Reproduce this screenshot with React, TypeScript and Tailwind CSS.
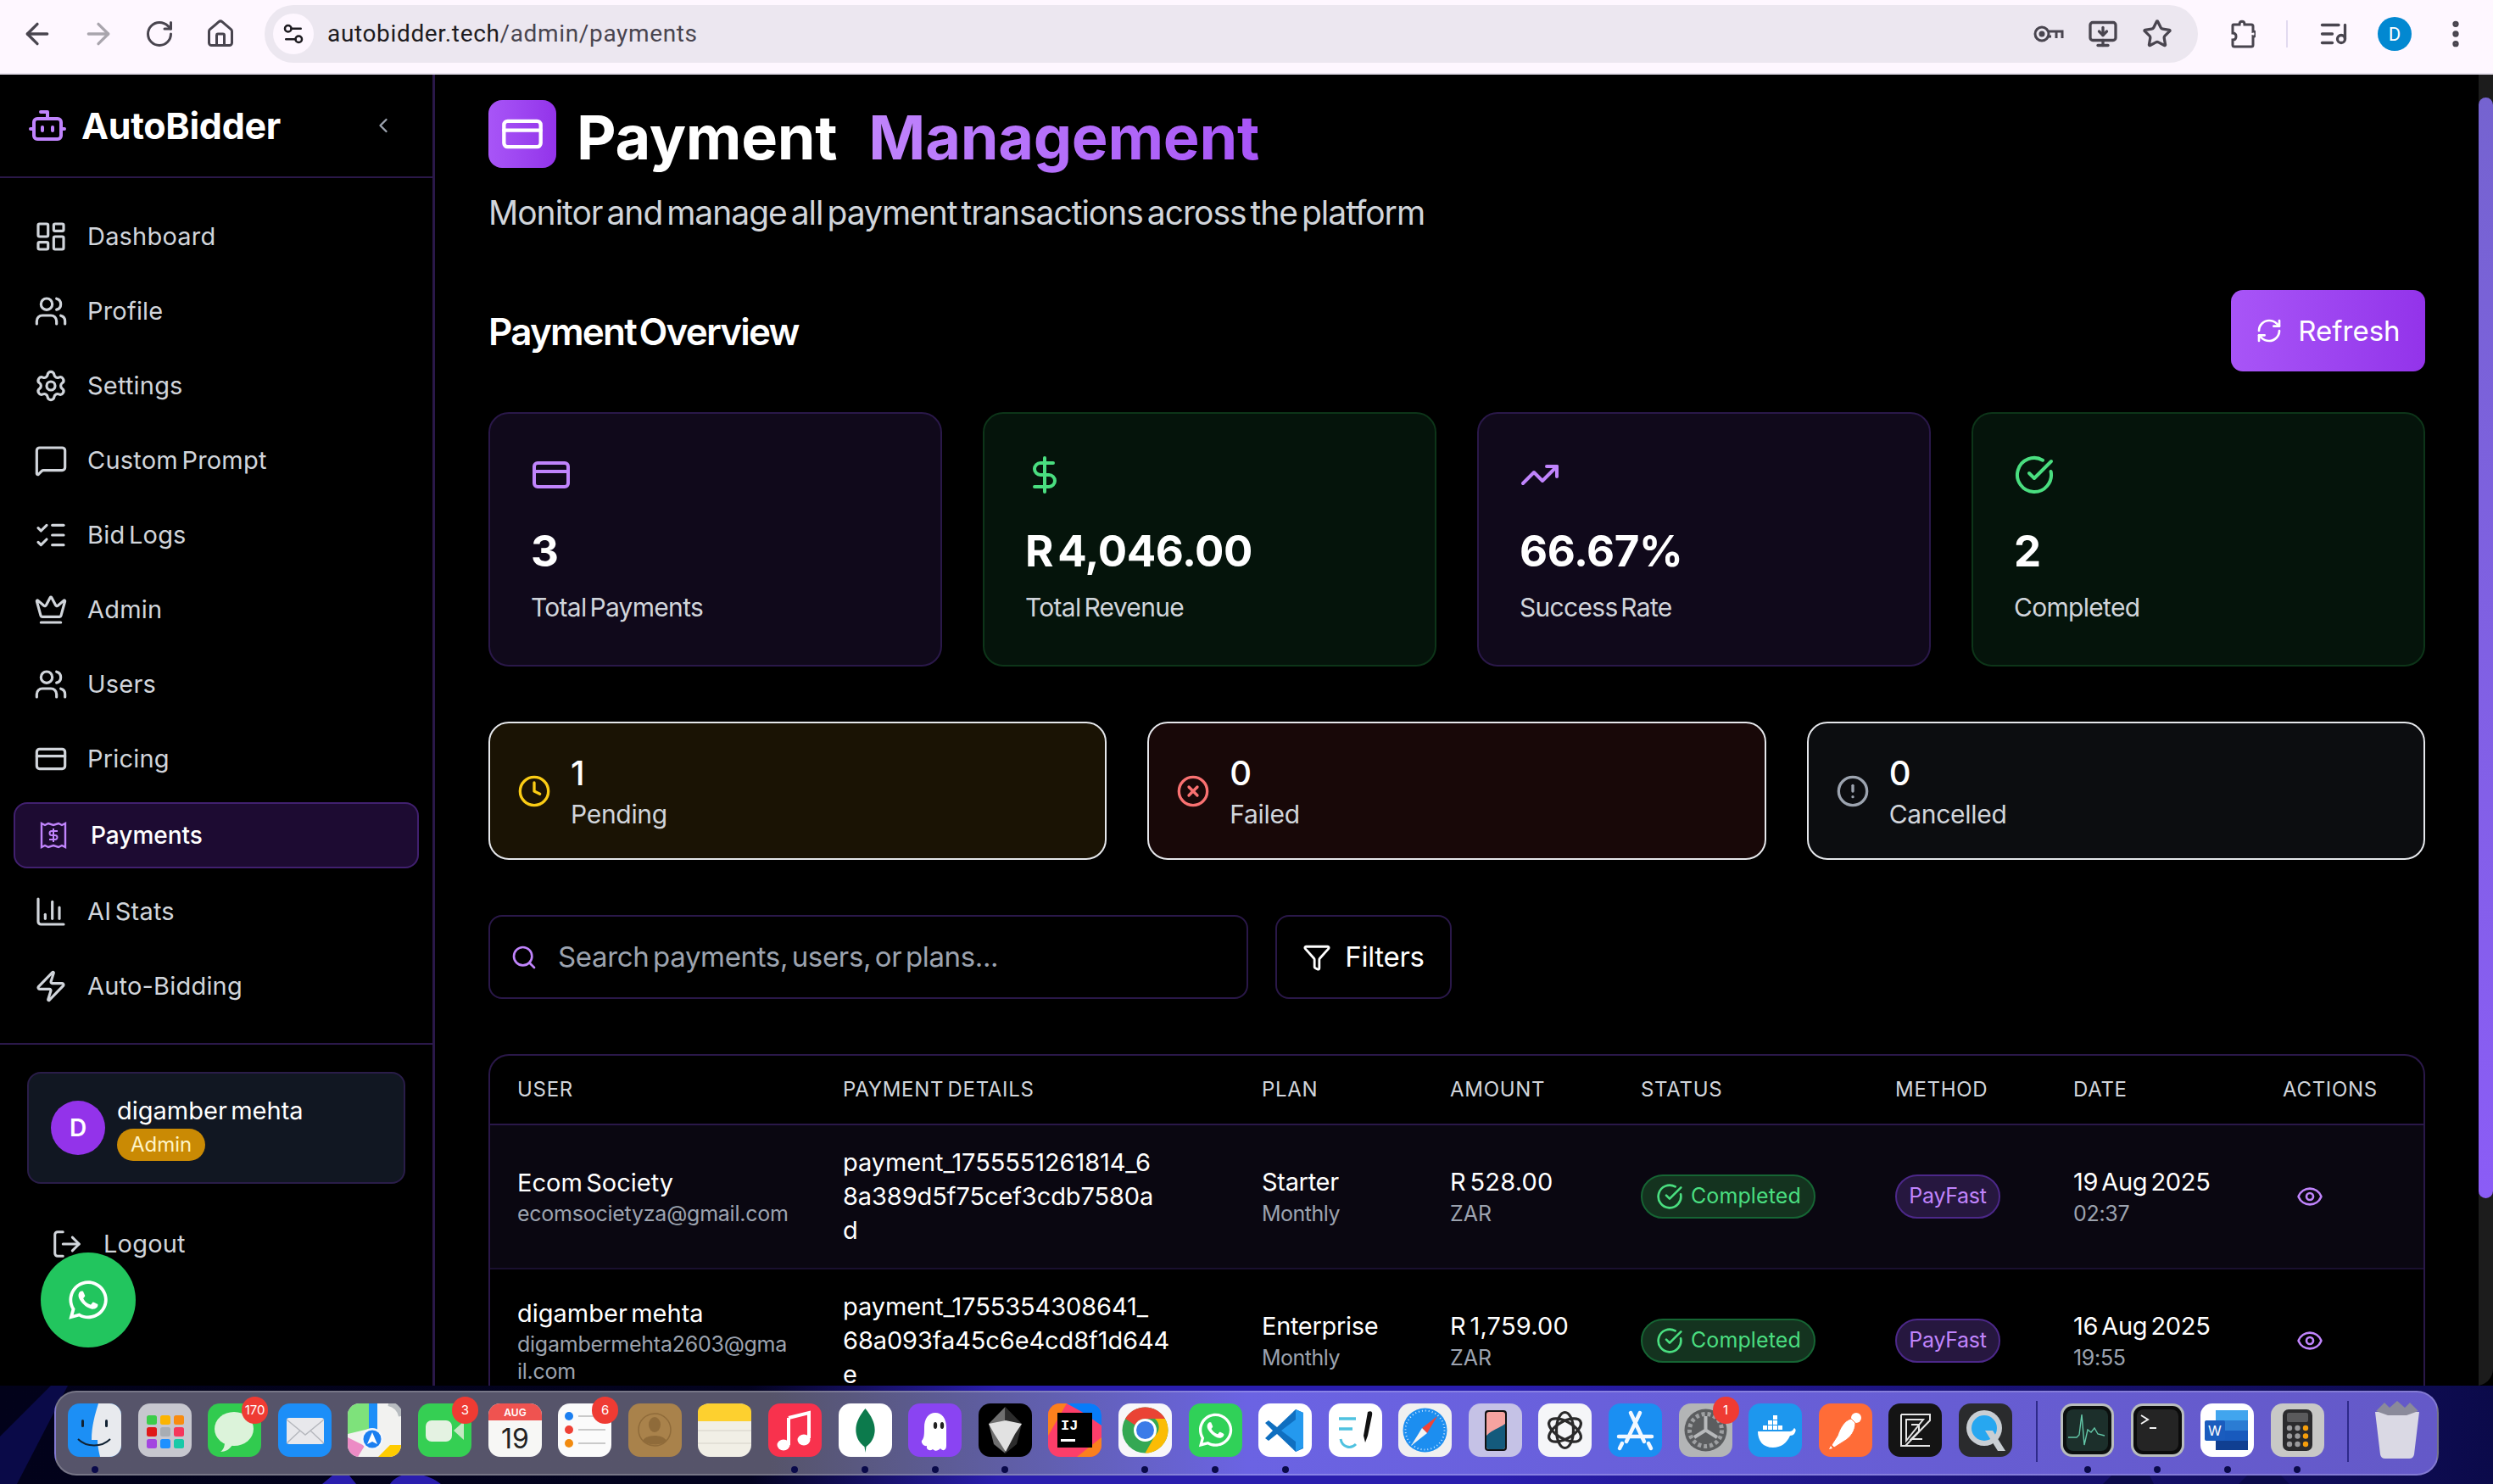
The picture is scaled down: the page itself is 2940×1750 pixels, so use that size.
import type { ReactNode } from "react";
import {
  ArrowLeft,
  ArrowRight,
  Bot,
  ChartColumn,
  ChevronLeft,
  CircleAlert,
  CircleCheckBig,
  CircleX,
  Clock,
  CreditCard,
  Crown,
  DollarSign,
  EllipsisVertical,
  Eye,
  Filter,
  House,
  LayoutDashboard,
  ListChecks,
  ListMusic,
  LogOut,
  MessageSquare,
  MonitorDown,
  RefreshCw,
  RotateCw,
  Search,
  Settings,
  Settings2,
  Star,
  TrendingUp,
  Users,
  Zap,
} from "lucide-react";
import { FaWhatsapp } from "react-icons/fa";

function ReceiptDollar({ className }: { className?: string }) {
  return (
    <svg viewBox="0 0 32 32" fill="none" stroke="currentColor" strokeWidth="2.4" className={className}>
      <path d="M2 2v28l4-2 4 2 6-2 6 2 4-2 4 2V2l-4 2-4-2-6 2-6-2-4 2z" />
      <path d="M21 11h-7a2.5 2.5 0 0 0 0 5h4a2.5 2.5 0 0 1 0 5h-7M16 8v16" strokeWidth="2" />
    </svg>
  );
}

function ChromeKey() {
  return (
    <svg viewBox="0 0 36 24" fill="none" stroke="currentColor" strokeWidth="3" className="h-[24px] w-[36px]">
      <circle cx="10" cy="12" r="8" />
      <circle cx="10" cy="12" r="2" fill="currentColor" />
      <path d="M18 9h16v8M27 9v8M18 15h3" />
    </svg>
  );
}

function ChromePuzzle() {
  return (
    <svg viewBox="0 0 30 36" fill="none" stroke="currentColor" strokeWidth="3" className="h-[36px] w-[30px]">
      <path d="M4 7h7c0-5 6-5 6 0h8a2 2 0 0 1 2 2v6c4-1 4 7 0 6v10a2 2 0 0 1-2 2H5a2 2 0 0 1-2-2v-6c3 0 4-2 4-4s-1-4-4-4V8a1 1 0 0 1 1-1z" />
    </svg>
  );
}

const navItems = [
  { label: "Dashboard", icon: LayoutDashboard },
  { label: "Profile", icon: Users },
  { label: "Settings", icon: Settings },
  { label: "Custom Prompt", icon: MessageSquare },
  { label: "Bid Logs", icon: ListChecks },
  { label: "Admin", icon: Crown },
  { label: "Users", icon: Users },
  { label: "Pricing", icon: CreditCard },
  { label: "Payments", icon: ReceiptDollar, active: true },
  { label: "AI Stats", icon: ChartColumn },
  { label: "Auto-Bidding", icon: Zap },
];

const payments = [
  {
    name: "Ecom Society",
    email: ["ecomsocietyza@gmail.com"],
    id: ["payment_1755551261814_6", "8a389d5f75cef3cdb7580a", "d"],
    plan: "Starter",
    amount: "R 528.00",
    date: "19 Aug 2025",
    time: "02:37",
    rowClass: "bg-[#0a0711]",
  },
  {
    name: "digamber mehta",
    email: ["digambermehta2603@gma", "il.com"],
    id: ["payment_1755354308641_", "68a093fa45c6e4cd8f1d644", "e"],
    plan: "Enterprise",
    amount: "R 1,759.00",
    date: "16 Aug 2025",
    time: "19:55",
    rowClass: "bg-black",
  },
];

function BrowserBar() {
  return (
    <div className="flex h-[88px] shrink-0 items-center border-b-2 border-[#e8e2ee] bg-[#fef7ff] pb-[6px] text-[#49454f]">
      <div className="flex w-[312px] items-center pl-[24px]">
        <ArrowLeft className="h-[40px] w-[40px]" strokeWidth={2} />
        <ArrowRight className="ml-[32px] h-[40px] w-[40px] text-[#a9a5ad]" strokeWidth={2} />
        <RotateCw className="ml-[34px] h-[36px] w-[36px]" strokeWidth={2} />
        <House className="ml-[36px] h-[36px] w-[36px]" strokeWidth={2} />
      </div>
      <div className="flex h-[68px] w-[2280px] items-center rounded-full bg-[#ece7f0] pl-[10px] pr-[30px]">
        <div className="flex h-[48px] w-[48px] items-center justify-center rounded-full bg-[#fef7ff]">
          <Settings2 className="h-[30px] w-[30px] text-[#1d1b20]" strokeWidth={2} />
        </div>
        <span className="ml-[16px] text-[28px] tracking-[0.65px] text-[#1d1b20] font-['Roboto',sans-serif]">
          autobidder.tech<span className="text-[#49454f]">/admin/payments</span>
        </span>
        <div className="ml-auto flex items-center gap-[28px]">
          <ChromeKey />
          <MonitorDown className="h-[36px] w-[36px]" strokeWidth={2.2} />
          <Star className="h-[36px] w-[36px]" strokeWidth={2.2} />
        </div>
      </div>
      <div className="ml-[38px]">
        <ChromePuzzle />
      </div>
      <div className="ml-[36px] h-[32px] w-[2px] bg-[#e2daf0]" />
      <ListMusic className="ml-[36px] h-[36px] w-[36px]" strokeWidth={2.2} />
      <div className="ml-[34px] flex h-[40px] w-[40px] items-center justify-center rounded-full bg-[#0288d1] text-[22px] text-white font-['Roboto',sans-serif]">
        D
      </div>
      <EllipsisVertical className="ml-[32px] h-[40px] w-[40px]" strokeWidth={2.4} />
    </div>
  );
}

function Sidebar() {
  return (
    <aside className="flex h-full w-[513px] shrink-0 flex-col border-r-[3px] border-[#2a1849]">
      <div className="flex h-[122px] shrink-0 items-center border-b-2 border-[#2a1849] pl-[32px] pr-[44px]">
        <Bot className="h-[48px] w-[48px] text-[#c084fc]" strokeWidth={2} />
        <span className="ml-[16px] text-[43px] font-bold tracking-[-0.3px] text-white">AutoBidder</span>
        <ChevronLeft className="ml-auto h-[28px] w-[28px] text-[#9ca3af]" strokeWidth={2} />
      </div>
      <nav className="flex h-[1022px] shrink-0 flex-col gap-[12px] border-b-2 border-[#2a1849] px-[16px] pt-[31px]">
        {navItems.map((item) => {
          const Icon = item.icon;
          return item.active ? (
            <a
              key={item.label}
              className="my-[1px] flex h-[78px] items-center rounded-[16px] border-2 border-[#41206f] bg-[#1d0b32] pl-[29px] text-[28px] font-medium text-white"
            >
              <Icon className="h-[32px] w-[32px] text-[#c084fc]" />
              <span className="ml-[28px]">{item.label}</span>
            </a>
          ) : (
            <a key={item.label} className="flex h-[76px] items-center pl-[24px] text-[29px] tracking-[0.2px] text-[#d1d5db]">
              <Icon className="h-[40px] w-[40px]" strokeWidth={1.9} />
              <span className="ml-[23px]">{item.label}</span>
            </a>
          );
        })}
      </nav>
      <div className="relative flex-1 px-[32px] pt-[32px]">
        <div className="flex h-[132px] w-[446px] items-center gap-[14px] rounded-[16px] border-2 border-[#2a1d49] bg-[#111722] pl-[26px]">
          <div className="flex h-[64px] w-[64px] items-center justify-center rounded-full bg-[#9333ea] text-[28px] font-semibold text-white">
            D
          </div>
          <div className="mt-[1px] flex flex-col">
            <span className="text-[29px] font-normal leading-[36px] text-white">digamber mehta</span>
            <span className="mt-[3px] w-fit rounded-full bg-[#ca8a04] px-[16px] text-[24px] leading-[38px] text-[#fef3c7]">
              Admin
            </span>
          </div>
        </div>
        <div className="ml-[28px] mt-[49px] flex items-center gap-[24px] text-[29px] tracking-[0.2px] text-[#d1d5db]">
          <LogOut className="h-[38px] w-[38px]" strokeWidth={1.9} />
          <span>Logout</span>
        </div>
        {/* floating whatsapp button */}
        <div className="absolute left-[48px] top-[245px] flex h-[112px] w-[112px] items-center justify-center rounded-full bg-[#22c55e]">
          <FaWhatsapp className="h-[52px] w-[52px] text-white" />
        </div>
      </div>
    </aside>
  );
}

function StatCard({
  icon,
  value,
  label,
  green,
}: {
  icon: ReactNode;
  value: string;
  label: string;
  green?: boolean;
}) {
  return (
    <div
      className={`h-[300px] rounded-[24px] border-2 px-[48px] pt-[48px] ${
        green ? "border-[#0d3519] bg-[#05140b]" : "border-[#2a1849] bg-[#10091b]"
      }`}
    >
      <div className="h-[48px]">{icon}</div>
      <div className="mt-[30px] text-[51px] font-bold leading-[72px] tracking-[-0.4px] text-white">{value}</div>
      <div className="mt-[10px] text-[30px] leading-[40px] tracking-[-0.7px] text-[#d1d5db]">{label}</div>
    </div>
  );
}

function SmallCard({
  icon,
  value,
  label,
  bg,
}: {
  icon: ReactNode;
  value: string;
  label: string;
  bg: string;
}) {
  return (
    <div className={`flex h-[163px] items-center gap-[23px] rounded-[24px] border-2 border-[#e5e7eb] pl-[32px] ${bg}`}>
      {icon}
      <div className="flex flex-col">
        <span className="mt-[2px] text-[40px] font-medium leading-[52px] text-white">{value}</span>
        <span className="text-[30px] leading-[44px] tracking-[-0.3px] text-[#d1d5db]">{label}</span>
      </div>
    </div>
  );
}

function PaymentsTable() {
  const headCell = "px-[32px] text-left text-[24px] font-normal tracking-[0.7px] text-[#d1d5db]";
  const cell = "px-[32px] py-[24px] align-middle";
  return (
    <div className="overflow-hidden rounded-t-[24px] border-x-2 border-t-2 border-[#2a1849]">
      <table className="w-full table-fixed border-collapse">
        <colgroup>
          <col className="w-[384px]" />
          <col className="w-[494px]" />
          <col className="w-[222px]" />
          <col className="w-[225px]" />
          <col className="w-[300px]" />
          <col className="w-[210px]" />
          <col className="w-[247px]" />
          <col />
        </colgroup>
        <thead>
          <tr className="h-[81px] border-b-2 border-[#2a1849]">
            <th className={headCell}>USER</th>
            <th className={headCell}>PAYMENT DETAILS</th>
            <th className={headCell}>PLAN</th>
            <th className={headCell}>AMOUNT</th>
            <th className={headCell}>STATUS</th>
            <th className={headCell}>METHOD</th>
            <th className={headCell}>DATE</th>
            <th className={headCell}>ACTIONS</th>
          </tr>
        </thead>
        <tbody>
          {payments.map((p) => (
            <tr key={p.name} className={`border-b-2 border-[#1a1030] ${p.rowClass}`}>
              <td className={cell}>
                <div className="text-[29px] leading-[40px] text-white">{p.name}</div>
                <div className="whitespace-nowrap text-[25px] leading-[32px] tracking-[-0.25px] text-[#9ca3af]">
                  {p.email.map((line) => (
                    <div key={line}>{line}</div>
                  ))}
                </div>
              </td>
              <td className={`${cell} whitespace-nowrap text-[29px] leading-[40px] tracking-[-0.1px] text-white`}>
                {p.id.map((line) => (
                  <div key={line}>{line}</div>
                ))}
              </td>
              <td className={cell}>
                <div className="text-[29px] leading-[40px] tracking-[-0.3px] text-white">{p.plan}</div>
                <div className="text-[25px] leading-[34px] tracking-[-0.5px] text-[#9ca3af]">Monthly</div>
              </td>
              <td className={cell}>
                <div className="text-[29px] leading-[40px] tracking-[0.2px] text-white">{p.amount}</div>
                <div className="text-[25px] leading-[34px] text-[#9ca3af]">ZAR</div>
              </td>
              <td className={cell}>
                <span className="inline-flex h-[52px] w-[206px] items-center gap-[9px] rounded-full border-2 border-[#166534] bg-[#14331f] pl-[16px] text-[25px] tracking-[0.1px] text-[#4ade80]">
                  <CircleCheckBig className="h-[32px] w-[32px]" strokeWidth={2} />
                  Completed
                </span>
              </td>
              <td className={cell}>
                <span className="inline-flex h-[52px] w-[124px] items-center justify-center rounded-full border-2 border-[#4c2889] bg-[#26173f] text-[25px] tracking-[-0.3px] text-[#c084fc]">
                  PayFast
                </span>
              </td>
              <td className={cell}>
                <div className="whitespace-nowrap text-[29px] leading-[40px] tracking-[-0.3px] text-white">{p.date}</div>
                <div className="text-[25px] leading-[34px] tracking-[-0.3px] text-[#9ca3af]">{p.time}</div>
              </td>
              <td className={cell}>
                <Eye className="ml-[16px] h-[32px] w-[32px] text-[#c084fc]" strokeWidth={2} />
              </td>
            </tr>
          ))}
        </tbody>
      </table>
    </div>
  );
}

function MainPanel() {
  return (
    <main className="flex h-full min-w-0 flex-1">
      <div className="min-w-0 flex-1 overflow-hidden pl-[63px] pr-[63px] pt-[30px]">
        <div className="flex h-[80px] items-center">
          <div className="flex h-[80px] w-[80px] items-center justify-center rounded-[16px] bg-gradient-to-r from-[#a855f7] to-[#9333ea]">
            <CreditCard className="h-[52px] w-[52px] text-white" strokeWidth={2} />
          </div>
          <h1 className="ml-[24px] pt-[8px] text-[72px] font-bold leading-[72px] tracking-[-0.3px] text-white">Payment</h1>
          <span className="ml-[37px] bg-gradient-to-r from-[#c084fc] to-[#a855f7] bg-clip-text pt-[8px] text-[72px] font-bold leading-[84px] tracking-[-0.3px] text-transparent">
            Management
          </span>
        </div>
        <p className="mt-[23px] text-[39px] leading-[60px] tracking-[-1px] text-[#d1d5db]">
          Monitor and manage all payment transactions across the platform
        </p>
        <div className="mt-[61px] flex h-[96px] items-center justify-between">
          <h2 className="mt-[2px] text-[44px] font-semibold tracking-[-1.8px] text-white">Payment Overview</h2>
          <button className="flex h-[96px] w-[229px] items-center justify-center gap-[18px] rounded-[14px] bg-gradient-to-r from-[#a855f7] to-[#9333ea] text-[33px] text-white">
            <RefreshCw className="h-[32px] w-[32px]" strokeWidth={2} />
            <span className="mt-[2px]">Refresh</span>
          </button>
        </div>
        <div className="mt-[48px] grid grid-cols-4 gap-[48px]">
          <StatCard icon={<CreditCard className="h-[48px] w-[48px] text-[#c084fc]" strokeWidth={2} />} value="3" label="Total Payments" />
          <StatCard icon={<DollarSign className="-ml-[1px] h-[48px] w-[48px] text-[#4ade80]" strokeWidth={2} />} value="R 4,046.00" label="Total Revenue" green />
          <StatCard icon={<TrendingUp className="h-[48px] w-[48px] text-[#c084fc]" strokeWidth={2} />} value="66.67%" label="Success Rate" />
          <StatCard icon={<CircleCheckBig className="h-[48px] w-[48px] text-[#4ade80]" strokeWidth={2} />} value="2" label="Completed" green />
        </div>
        <div className="mt-[65px] grid grid-cols-3 gap-[48px]">
          <SmallCard icon={<Clock className="h-[40px] w-[40px] text-[#facc15]" strokeWidth={2} />} value="1" label="Pending" bg="bg-[#1a1304]" />
          <SmallCard icon={<CircleX className="h-[40px] w-[40px] text-[#f87171]" strokeWidth={2} />} value="0" label="Failed" bg="bg-[#180808]" />
          <SmallCard icon={<CircleAlert className="h-[40px] w-[40px] text-[#9ca3af]" strokeWidth={2} />} value="0" label="Cancelled" bg="bg-[#0c0d10]" />
        </div>
        <div className="mt-[65px] flex h-[99px] gap-[32px]">
          <div className="flex w-[896px] items-center gap-[24px] rounded-[16px] border-2 border-[#2a1849] pl-[24px]">
            <Search className="h-[32px] w-[32px] text-[#c084fc]" strokeWidth={2} />
            <span className="text-[33px] tracking-[-0.35px] text-[#9ca3af]">Search payments, users, or plans...</span>
          </div>
          <div className="flex w-[208px] items-center justify-center gap-[16px] rounded-[16px] border-2 border-[#2a1849] text-[33px] tracking-[-0.3px] text-white">
            <Filter className="h-[34px] w-[34px]" strokeWidth={2} />
            Filters
          </div>
        </div>
        <div className="mt-[65px]">
          <PaymentsTable />
        </div>
      </div>
      {/* scrollbar */}
      <div className="h-full w-[17px] shrink-0 bg-[#1c1c1c] pt-[27px]">
        <div className="h-[1298px] rounded-full bg-gradient-to-b from-[#7563d0] to-[#8b5cf6]" />
      </div>
    </main>
  );
}

/* ---- dock ---- */

function Tile({ bg, children }: { bg: string; children?: ReactNode }) {
  return (
    <svg viewBox="0 0 63 63" className="h-[63px] w-[63px]">
      <rect width="63" height="63" rx="14" fill={bg} />
      {children}
    </svg>
  );
}

const dockLeft: { key: string; dot?: boolean; badge?: string; tile: ReactNode }[] = [
  {
    key: "finder",
    dot: true,
    tile: (
      <Tile bg="#1c8ff5">
        <path d="M36 0h13a14 14 0 0 1 14 14v35a14 14 0 0 1-14 14H38c-2-8-3-14-3-20h-7c0-16 4-30 8-43z" fill="#e8eaee" />
        <rect x="16" y="19" width="3" height="9" rx="1.5" fill="#123" />
        <rect x="44" y="19" width="3" height="9" rx="1.5" fill="#123" />
        <path d="M12 42c10 10 28 10 38 0" fill="none" stroke="#123" strokeWidth="2" />
      </Tile>
    ),
  },
  {
    key: "launchpad",
    tile: (
      <Tile bg="#c7c7cf">
        {["#3ccd4a", "#fcb400", "#f88b10", "#e01818", "#a8adb3", "#f5365c", "#a345e0", "#1e90ff", "#18c9a8"].map((c, i) => (
          <rect key={c} x={10 + (i % 3) * 16} y={14 + Math.floor(i / 3) * 14} width="12" height="11" rx="2.5" fill={c} />
        ))}
      </Tile>
    ),
  },
  {
    key: "messages",
    badge: "170",
    tile: (
      <Tile bg="#31cb4f">
        <ellipse cx="31" cy="30" rx="23" ry="20" fill="#dcf3da" />
        <path d="M20 46c0 5-2 9-5 11 6 0 11-3 14-8z" fill="#dcf3da" />
      </Tile>
    ),
  },
  {
    key: "mail",
    tile: (
      <Tile bg="#1c8ef8">
        <rect x="10" y="17" width="44" height="31" rx="3" fill="#e8e8ec" />
        <path d="M10 19l22 18 22-18M10 47l16-15M54 47L38 32" fill="none" stroke="#b5b7bd" strokeWidth="1.4" />
      </Tile>
    ),
  },
  {
    key: "maps",
    tile: (
      <Tile bg="#f2f2f0">
        <path d="M0 14A14 14 0 0 1 14 0h11v30L0 36z" fill="#7ee27b" />
        <path d="M25 0h10v36H25z" fill="#1c8ef8" />
        <path d="M0 40l20 10 -8 13H14A14 14 0 0 1 0 49z" fill="#ec8bc5" />
        <path d="M36 63l14-14 13 0a14 14 0 0 1-14 14z" fill="#ffcc00" />
        <path d="M48 0a18 18 0 0 1 15 15" fill="none" stroke="#b8bcc0" strokeWidth="6" />
        <circle cx="29" cy="42" r="13" fill="#f4f6fa" />
        <circle cx="29" cy="42" r="10.5" fill="#1c7ff0" />
        <path d="M29 34l6 14-6-3-6 3z" fill="#fff" />
      </Tile>
    ),
  },
  {
    key: "facetime",
    badge: "3",
    tile: (
      <Tile bg="#35cf53">
        <rect x="9" y="20" width="31" height="25" rx="7" fill="#e4f2e2" />
        <path d="M42 32l12-11v22z" fill="#c5e8c3" />
      </Tile>
    ),
  },
  {
    key: "calendar",
    tile: (
      <Tile bg="#f7f7f5">
        <path d="M0 14A14 14 0 0 1 14 0h35a14 14 0 0 1 14 14v6H0z" fill="#ef5350" />
        <text x="31.5" y="15" textAnchor="middle" fontSize="12" fontFamily="Inter, sans-serif" fontWeight="600" fill="#fff">AUG</text>
        <text x="31.5" y="53" textAnchor="middle" fontSize="32" fontFamily="Inter, sans-serif" fill="#222">19</text>
      </Tile>
    ),
  },
  {
    key: "reminders",
    badge: "6",
    tile: (
      <Tile bg="#fbfbfb">
        <circle cx="13" cy="15" r="5" fill="#1c7ff0" />
        <circle cx="13" cy="31" r="5" fill="#ef4136" />
        <circle cx="13" cy="47" r="5" fill="#f28b10" />
        <path d="M24 15h32M24 31h32M24 47h32" stroke="#bbb" strokeWidth="1.5" />
      </Tile>
    ),
  },
  {
    key: "contacts",
    tile: (
      <Tile bg="#a9824b">
        <circle cx="31" cy="31" r="19" fill="none" stroke="#8f6b3a" strokeWidth="1.5" />
        <ellipse cx="31" cy="25" rx="7" ry="9" fill="#8f6b3a" />
        <path d="M17 44c4-8 24-8 28 0-6 6-22 6-28 0z" fill="#8f6b3a" />
      </Tile>
    ),
  },
  {
    key: "notes",
    tile: (
      <Tile bg="#f1efe6">
        <path d="M0 14A14 14 0 0 1 14 0h35a14 14 0 0 1 14 14v16H0z" fill="#fdd02f" transform="scale(1 .7)" />
        <path d="M0 32h63M0 47h63" stroke="#dedcd2" strokeWidth="1.5" />
      </Tile>
    ),
  },
  {
    key: "music",
    dot: true,
    tile: (
      <Tile bg="#f8324d">
        <path d="M24 17l24-6v30" fill="none" stroke="#fff" strokeWidth="4" />
        <path d="M24 17v32" stroke="#fff" strokeWidth="4" />
        <ellipse cx="18" cy="49" rx="7.5" ry="6.5" fill="#fff" />
        <ellipse cx="42" cy="43" rx="7.5" ry="6.5" fill="#fff" />
      </Tile>
    ),
  },
  {
    key: "mongodb",
    dot: true,
    tile: (
      <Tile bg="#ffffff">
        <path d="M31.5 6c8 10 12 18 11 28-1 9-6 14-10 17l-1 7-1-7c-4-3-9-8-10-17-1-10 3-18 11-28z" fill="#0c7a4c" />
      </Tile>
    ),
  },
  {
    key: "ghost",
    dot: true,
    tile: (
      <Tile bg="#8a44f2">
        <path d="M16 44c3-3 3-8 3-16 0-10 5-17 13-17s13 7 13 17v22c0 5-4 7-7 3-3 3-6 4-9 1-4 3-8 0-7-4-3 1-7-3-6-6z" fill="#fff" />
        <ellipse cx="32" cy="26" rx="2.2" ry="4" fill="#222" />
        <ellipse cx="40" cy="26" rx="2.2" ry="4" fill="#222" />
      </Tile>
    ),
  },
  {
    key: "crystal",
    dot: true,
    tile: (
      <Tile bg="#000000">
        <path d="M31.5 4L12 24l6 24 13.5 11z" fill="#6f6f6f" />
        <path d="M31.5 4L51 24l-6 24L31.5 59z" fill="#2c2c2c" />
        <path d="M12 24l20-4 19 4-8 12-11 21-14-22z" fill="#e2e2e2" />
      </Tile>
    ),
  },
  {
    key: "intellij",
    tile: (
      <Tile bg="#fc3e6a">
        <path d="M0 14A14 14 0 0 1 14 0h8L0 38z" fill="#fc801d" />
        <path d="M22 0h27a14 14 0 0 1 14 14v12L40 10z" fill="#087cfa" />
        <path d="M63 40v9a14 14 0 0 1-14 14H34z" fill="#fc801d" />
        <rect x="11" y="11" width="41" height="41" fill="#000" />
        <text x="15" y="31" fontSize="17" fontFamily="Liberation Mono, monospace" fontWeight="700" fill="#fff">IJ</text>
        <rect x="15" y="42" width="17" height="3" fill="#fff" />
      </Tile>
    ),
  },
  {
    key: "chrome",
    dot: true,
    tile: (
      <Tile bg="#f7f6fa">
        <circle cx="31.5" cy="31.5" r="27" fill="#34a853" />
        <path d="M31.5 4.5a27 27 0 0 1 23.4 13.5H31.5a13.5 13.5 0 0 0-12 7.5L8.1 18A27 27 0 0 1 31.5 4.5z" fill="#ea4335" />
        <path d="M54.9 18a27 27 0 0 1-23.4 40.5L43 38a13 13 0 0 0 0-20z" fill="#fbbc04" />
        <circle cx="31.5" cy="31.5" r="13.5" fill="#fff" />
        <circle cx="31.5" cy="31.5" r="10.5" fill="#3b7be8" />
      </Tile>
    ),
  },
  {
    key: "whatsapp",
    dot: true,
    tile: (
      <Tile bg="#30d158">
        <foreignObject x="9" y="9" width="45" height="45">
          <FaWhatsapp className="h-[45px] w-[45px] text-white" />
        </foreignObject>
      </Tile>
    ),
  },
  {
    key: "vscode",
    dot: true,
    tile: (
      <Tile bg="#ffffff">
        <path d="M44 7L22 28 12 20l-4 3 9 9-9 9 4 3 10-8 22 21 9-4V11z" fill="#0f6fc0" />
        <path d="M44 7l9 4v41l-9 5V19L27 32l17 13z" fill="#2499ee" />
      </Tile>
    ),
  },
  {
    key: "freeform",
    tile: (
      <Tile bg="#ffffff">
        <path d="M12 18h20M12 30h16" stroke="#4fc2e0" strokeWidth="3.5" />
        <path d="M14 42c2 10 12 12 18 6" fill="none" stroke="#4fc2e0" strokeWidth="3" />
        <path d="M46 10c4-2 6 0 5 4l-5 24-3 8-2-8z" fill="#111" />
      </Tile>
    ),
  },
  {
    key: "safari",
    tile: (
      <Tile bg="#f0f0f0">
        <circle cx="31.5" cy="31.5" r="26" fill="#1c8ef0" />
        <circle cx="31.5" cy="31.5" r="23" fill="none" stroke="#cfe6ff" strokeWidth="2" strokeDasharray="1 3" />
        <path d="M46 15L28 29l6 6z" fill="#f04438" />
        <path d="M15 50l13-21 6 6z" fill="#f4f4f4" />
      </Tile>
    ),
  },
  {
    key: "mirroring",
    tile: (
      <Tile bg="#c5c2e6">
        <rect x="19" y="8" width="26" height="48" rx="4" fill="#111" />
        <rect x="21" y="10" width="22" height="44" rx="3" fill="#f5a3a0" />
        <path d="M21 38c8-8 14-8 22-14v27a3 3 0 0 1-3 3H24a3 3 0 0 1-3-3z" fill="#145a7c" />
      </Tile>
    ),
  },
  {
    key: "chatgpt",
    tile: (
      <Tile bg="#f5f6f8">
        <g fill="none" stroke="#2a2a2a" strokeWidth="3.2">
          <ellipse cx="31.5" cy="31.5" rx="10" ry="21" />
          <ellipse cx="31.5" cy="31.5" rx="10" ry="21" transform="rotate(60 31.5 31.5)" />
          <ellipse cx="31.5" cy="31.5" rx="10" ry="21" transform="rotate(120 31.5 31.5)" />
        </g>
      </Tile>
    ),
  },
  {
    key: "appstore",
    tile: (
      <Tile bg="#1a8ff2">
        <path d="M37 11L21 45M26 11l16 34M12 39h39M16 47l-3 6M47 47l3 6" stroke="#f2f8ff" strokeWidth="4.5" strokeLinecap="round" />
      </Tile>
    ),
  },
  {
    key: "settings",
    badge: "1",
    tile: (
      <Tile bg="#b3b5b6">
        <circle cx="31.5" cy="31.5" r="25" fill="#5b5d5f" />
        <circle cx="31.5" cy="31.5" r="19" fill="none" stroke="#9ea0a2" strokeWidth="5" strokeDasharray="4 3" />
        <path d="M31.5 31.5V15M31.5 31.5L18 40M31.5 31.5L45 40" stroke="#b7b9bb" strokeWidth="4" />
      </Tile>
    ),
  },
  {
    key: "docker",
    tile: (
      <Tile bg="#1d97ee">
        <path d="M11 33h38c3 0 4-3 5-4 2 1 2 3 1 5-1 3-4 4-6 4-4 9-11 14-20 14-12 0-18-8-18-19z" fill="#fff" />
        <g fill="#fff">
          <rect x="17" y="26" width="5" height="5" />
          <rect x="23" y="26" width="5" height="5" />
          <rect x="29" y="26" width="5" height="5" />
          <rect x="35" y="26" width="5" height="5" />
          <rect x="23" y="20" width="5" height="5" />
          <rect x="29" y="20" width="5" height="5" />
          <rect x="29" y="14" width="5" height="5" />
        </g>
      </Tile>
    ),
  },
  {
    key: "postman",
    tile: (
      <Tile bg="#ff6c37">
        <circle cx="44" cy="17" r="6" fill="#fff" />
        <path d="M38 18c-8 2-13 11-16 20l-7 11 3 3 11-7c9-5 14-13 14-22z" fill="#fff" stroke="#ff6c37" strokeWidth="1" />
        <path d="M14 50l-2 4 4-1z" fill="#fff" />
      </Tile>
    ),
  },
  {
    key: "zed",
    tile: (
      <Tile bg="#141414">
        <g fill="none" stroke="#e5e5e5" strokeWidth="2">
          <path d="M15 13h34v7L20 50h29" />
          <path d="M15 13v37h5" />
          <path d="M21 19h20L21 44z" />
          <path d="M27 25h9v8l-9 9h13" />
        </g>
      </Tile>
    ),
  },
  {
    key: "quicktime",
    tile: (
      <Tile bg="#2a2b2d">
        <circle cx="30" cy="29" r="21" fill="#c9ced3" />
        <circle cx="30" cy="29" r="15" fill="#27a7f0" />
        <path d="M31 32l15 24h9L40 32z" fill="#c9ced3" />
      </Tile>
    ),
  },
];

const dockRight: { key: string; dot?: boolean; tile: ReactNode }[] = [
  {
    key: "activity",
    dot: true,
    tile: (
      <Tile bg="#b9bdbc">
        <rect x="3" y="3" width="57" height="57" rx="11" fill="#0b0f0e" />
        <rect x="7" y="7" width="49" height="49" rx="8" fill="#1c2f2b" />
        <path d="M9 40h10l3-3 3-24 3 36 4-18 4 3 4-5 4 7 8 2" fill="none" stroke="#63c7a8" strokeWidth="1.4" />
      </Tile>
    ),
  },
  {
    key: "terminal",
    dot: true,
    tile: (
      <Tile bg="#b9bdbc">
        <rect x="3" y="3" width="57" height="57" rx="11" fill="#0b0b0b" />
        <rect x="7" y="7" width="49" height="49" rx="8" fill="#242424" />
        <path d="M12 14l8 5-8 5M22 29h8" fill="none" stroke="#f2f2f2" strokeWidth="2" />
      </Tile>
    ),
  },
  {
    key: "word",
    dot: true,
    tile: (
      <Tile bg="#ffffff">
        <rect x="18" y="8" width="38" height="12" fill="#41a5ee" />
        <rect x="18" y="20" width="38" height="12" fill="#2b7cd3" />
        <rect x="18" y="32" width="38" height="12" fill="#185abd" />
        <rect x="18" y="44" width="38" height="11" fill="#103f91" />
        <rect x="5" y="20" width="24" height="24" rx="2" fill="#1a5cbe" />
        <text x="17" y="38" textAnchor="middle" fontSize="16" fontFamily="Inter, sans-serif" fill="#fff">W</text>
      </Tile>
    ),
  },
  {
    key: "calculator",
    dot: true,
    tile: (
      <Tile bg="#c8c8c6">
        <rect x="14" y="7" width="35" height="49" rx="7" fill="#2b2b2d" />
        <rect x="19" y="11" width="25" height="11" rx="2" fill="#5a5a5c" />
        {[0, 1, 2].map((r) =>
          [0, 1, 2].map((c) => (
            <circle key={`${r}-${c}`} cx={22 + c * 9.5} cy={29 + r * 9.5} r="3.2" fill={c === 2 ? "#f59e0b" : "#9a9a9c"} />
          )),
        )}
      </Tile>
    ),
  },
];

function DockItem({ tile, dot, badge }: { tile: ReactNode; dot?: boolean; badge?: string }) {
  return (
    <div className="relative flex w-[63px] shrink-0 flex-col items-center">
      {tile}
      <div className={`mt-[11px] h-[8px] w-[8px] rounded-full ${dot ? "bg-[#0a0a4a]" : "bg-transparent"}`} />
      {badge && (
        <span className="absolute -right-[8px] -top-[8px] flex h-[32px] min-w-[31px] items-center justify-center rounded-full bg-[#ef3b33] text-[15px] text-white">
          {badge}
        </span>
      )}
    </div>
  );
}

function Dock() {
  return (
    <div className="relative h-[116px] shrink-0 overflow-hidden px-[64px] pt-[6px]">
      {/* wallpaper */}
      <svg viewBox="0 0 2940 116" preserveAspectRatio="none" className="absolute inset-0 h-full w-full">
        <defs>
          <linearGradient id="wall" x1="0" x2="1" y1="0" y2="0">
            <stop offset="0" stopColor="#02021a" />
            <stop offset="0.3" stopColor="#03031f" />
            <stop offset="0.4" stopColor="#2a1eae" />
            <stop offset="0.6" stopColor="#2a1eae" />
            <stop offset="0.8" stopColor="#191275" />
            <stop offset="1" stopColor="#0b0a4a" />
          </linearGradient>
        </defs>
        <rect width="2940" height="116" fill="url(#wall)" />
        <path d="M0 60L60 0h20L20 116H0z" fill="#0a0a48" />
        <path d="M380 116l24-20 16 20zM460 116c10-16 40-16 60 0z" fill="#2a1eae" />
        <path d="M2480 116l40-40 20 40zM2640 116l30-30 30 30z" fill="#0b0a4a" />
      </svg>
      <div className="relative flex h-[100px] items-start rounded-[26px] border-2 border-white/20 bg-gradient-to-r from-[#56546a] from-30% via-[#6b63e3] via-50% to-[#6459c8] pl-[14px] pt-[13px]">
        <div className="flex gap-[19.6px]">
          {dockLeft.map((item) => (
            <DockItem key={item.key} tile={item.tile} dot={item.dot} badge={item.badge} />
          ))}
        </div>
        <div className="ml-[28px] mt-[-3px] h-[72px] w-[2px] bg-[#2e2a8a]" />
        <div className="ml-[27px] flex gap-[19.6px]">
          {dockRight.map((item) => (
            <DockItem key={item.key} tile={item.tile} dot={item.dot} />
          ))}
        </div>
        <div className="ml-[27px] mt-[-3px] h-[72px] w-[2px] bg-[#2e2a8a]" />
        {/* trash */}
        <svg viewBox="0 0 58 70" className="ml-[28px] mt-[-4px] h-[70px] w-[58px]">
          <path d="M3 14h52l-6 50a6 6 0 0 1-6 5H15a6 6 0 0 1-6-5z" fill="#dad9e4" />
          <path d="M4 13l10-10 6 6 9-8 9 8 6-6 10 10-14 5H18z" fill="#8a8a9a" />
        </svg>
      </div>
    </div>
  );
}

export default function App() {
  return (
    <div className="flex h-[1750px] w-[2940px] flex-col overflow-hidden bg-black font-['Inter',sans-serif] [&_*]:[word-spacing:-0.13em]">
      <BrowserBar />
      <div className="flex h-[1546px] shrink-0 overflow-hidden rounded-b-[20px] bg-black">
        <Sidebar />
        <MainPanel />
      </div>
      <Dock />
    </div>
  );
}
